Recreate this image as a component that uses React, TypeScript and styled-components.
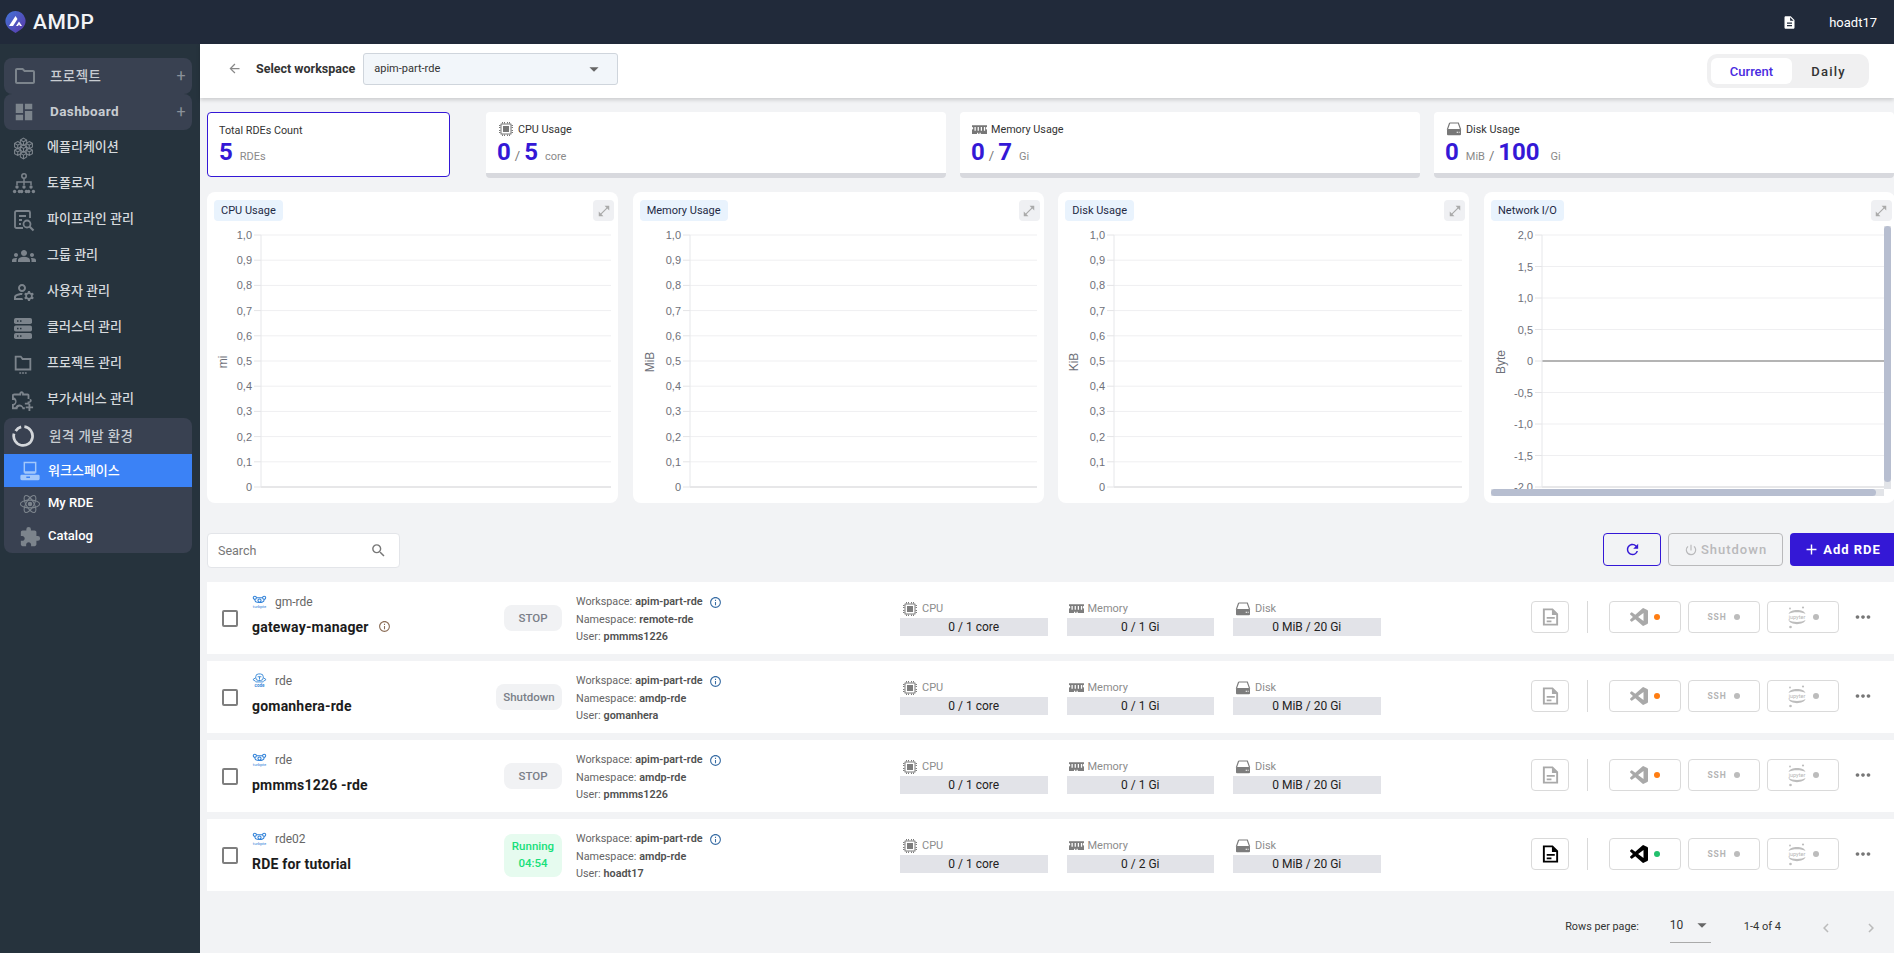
import React from "react";
import styled, { createGlobalStyle } from "styled-components";
import {
  MdOutlineFolder, MdDashboard, MdGroups, MdOutlineManageAccounts,
  MdExtension, MdDescription, MdArrowBack, MdArrowDropDown, MdOpenInFull, MdSearch, MdRefresh,
  MdPowerSettingsNew, MdAdd, MdInfoOutline, MdMoreHoriz, MdChevronLeft, MdChevronRight,
} from "react-icons/md";

const Global = createGlobalStyle`
  html, body { margin: 0; padding: 0; height: 100%; overflow: hidden; background: #f2f3f5; }
  #root { height: 100%; }
  * { box-sizing: border-box; }
  body { font-family: Roboto, "Noto Sans CJK KR", sans-serif; color: #222; }
`;

const Page = styled.div`display: flex; flex-direction: column; width: 1894px; height: 953px; overflow: hidden;`;
const Header = styled.header`
  height: 44px; flex: none; background: #212a3a; display: flex; align-items: center;
  padding: 0 17px 0 5px; color: #fff;
`;
const Brand = styled.div`font-size: 21px; font-weight: 500; letter-spacing: .5px; margin-left: 7px; color: #f3f4f6;`;
const HeaderRight = styled.div`margin-left: auto; display: flex; align-items: center; gap: 32px; font-size: 13px;`;
const Body = styled.div`flex: 1; display: flex; min-height: 0;`;

const Sidebar = styled.aside`width: 200px; flex: none; background: #26333d; padding: 14px 8px 0 4px;`;
const Group = styled.div`background: #394151; border-radius: 8px; overflow: hidden;`;
const GroupHead = styled.div<{ $inset?: number }>`
  height: 36px; display: flex; align-items: center; padding: 0 6px 0 ${p => p.$inset ?? 9}px; color: #c8ccd1;
  font-size: 13.5px; font-weight: 500; letter-spacing: .4px;
  svg { flex: none; color: #7c848c; }
`;
const GroupLabel = styled.span<{ $gap?: number; $bold?: boolean }>`
  margin-left: ${p => p.$gap ?? 13}px; flex: 1; padding-bottom: 2px; font-weight: ${p => (p.$bold ? 700 : 500)};
`;
const Plus = styled.span`color: #8a919a; font-size: 16px; line-height: 1; font-weight: 400;`;
const NavItem = styled.div`
  height: 36px; display: flex; align-items: center; padding-left: 8px; color: #d6dadd; font-size: 13px; font-weight: 500;
  svg { flex: none; color: #7c848c; }
`;
const NavLabel = styled.span<{ $gap?: number }>`margin-left: ${p => p.$gap ?? 13}px; padding-bottom: 5px;`;
const SubItem = styled.div<{ $active?: boolean }>`
  height: 33px; display: flex; align-items: center; padding-left: 15px; font-size: 13px; font-weight: 500; color: #fff;
  background: ${p => (p.$active ? "#3b82f6" : "transparent")};
  svg { flex: none; color: ${p => (p.$active ? "#a3c8fb" : "#7c848c")}; }
`;
const SubLabel = styled.span`margin-left: 7px; padding-bottom: 3px;`;

const Main = styled.main`flex: 1; min-width: 0; display: flex; flex-direction: column;`;
const TopBar = styled.div`
  height: 54px; flex: none; background: #fff; box-shadow: 0 2px 4px rgba(0,0,0,.16);
  display: flex; align-items: center; padding: 0 25px 0 27px;
`;
const WorkspacePick = styled.div`display: flex; align-items: center; color: #888; margin-top: -5px;`;
const TopTitle = styled.span`font-size: 12.5px; font-weight: 700; color: #333; margin: 0 8px 0 14px;`;
const SelectBox = styled.div`
  width: 255px; height: 32px; background: #f2f6fa; border: 1px solid #cfd5dc; border-radius: 3px;
  display: flex; align-items: center; justify-content: space-between; padding: 0 12px 0 10px;
  font-size: 11px; color: #333; svg { color: #666; }
`;
const Toggle = styled.div`
  margin-left: auto; width: 162px; height: 34px; background: #f0f0f1; border-radius: 10px; padding: 4px;
  display: flex; align-items: center;
`;
const ToggleOn = styled.div`
  width: 81px; height: 26px; background: #fff; border-radius: 6px; display: flex; align-items: center; justify-content: center;
  font-size: 13px; font-weight: 500; color: #4a2be0;
`;
const ToggleOff = styled.div`flex: 1; text-align: center; font-size: 13px; font-weight: 500; letter-spacing: 1.2px; color: #333;`;

const Content = styled.div`padding: 14px 0 0 7px; display: flex; flex-direction: column; flex: 1; min-height: 0;`;
const StatRow = styled.div`display: flex; height: 66px; flex: none;`;
const TotalCard = styled.div`
  width: 243px; margin-right: 36px; height: 65px; background: #fff; border: 1px solid #3418d6; border-radius: 4px; padding: 9px 11px;
`;
const StatCard = styled.div`
  width: 460px; margin-right: 14px; background: #fff; border-bottom: 5px solid #d8d9de; border-radius: 4px; padding: 7px 11px 0;
  &:last-child { margin-right: 0; }
`;
const StatHead = styled.div`
  display: flex; align-items: center; gap: 4px; font-size: 10.8px; color: #333; height: 20px; padding-left: 1px;
  svg { color: #777; }
`;
const TotalHead = styled.div`font-size: 10.8px; color: #333; line-height: 18px; margin-bottom: -1px;`;
const StatValue = styled.div`display: flex; align-items: baseline; height: 27px; line-height: 27px;`;
const Num = styled.span`font-size: 24px; font-weight: 700; color: #3418d6;`;
const Unit = styled.span<{ $gap?: number }>`font-size: 11px; color: #8a8a8a; margin-left: ${p => p.$gap ?? 7}px;`;
const Slash = styled.span`font-size: 13px; color: #777; margin: 0 4px 0 4px;`;

const ChartGrid = styled.div`
  display: grid; grid-template-columns: repeat(4, 411px); column-gap: 14.67px; margin-top: 14px; flex: none;
`;
const ChartCard = styled.section<{ $scroll?: boolean }>`
  height: 311px; background: #fff; border-radius: 8px; padding: 8px ${p => (p.$scroll ? 3 : 7)}px 0 7px;
`;
const ChartHead = styled.div<{ $flush?: boolean }>`
  display: flex; justify-content: space-between; height: 26px; margin-right: ${p => (p.$flush ? 0 : -3)}px;
`;
const ChartTitle = styled.span`
  height: 21px; background: #e9f3fd; border-radius: 4px; padding: 0 7px; font-size: 11px; font-weight: 400; line-height: 21px; color: #1f2a44;
`;
const Expand = styled.span`
  width: 21px; height: 21px; background: #eff0f3; border-radius: 4px; display: flex; align-items: center; justify-content: center; color: #aaa;
`;
const ChartScroll = styled.div`position: relative; width: 400px; height: 270px; overflow: hidden; svg { display: block; }`;
const ScrollX = styled.div`position: absolute; left: 0; bottom: 0; width: 393px; height: 7px; background: #e2e4e8;`;
const ThumbX = styled.div`width: 385px; height: 7px; border-radius: 4px; background: #b7bed0;`;
const ScrollY = styled.div`position: absolute; right: 0; top: 0; width: 7px; height: 263px; background: #e2e4e8;`;
const ThumbY = styled.div`width: 7px; height: 256px; border-radius: 4px; background: #b7bed0;`;
const ChartSvg = styled.svg`
  display: block;
  text { font-family: "Liberation Sans", Arial, sans-serif; font-size: 11px; fill: #6e7079; }
  text.unit { font-size: 12px; }
`;

const ListBar = styled.div`display: flex; align-items: flex-start; margin-top: 30px; height: 35px; flex: none;`;
const SearchBox = styled.div`
  width: 193px; height: 35px; background: #fff; border: 1px solid #e3e5e9; border-radius: 4px; display: flex; align-items: center;
  justify-content: space-between; padding: 0 12px 0 10px; font-size: 12.5px; color: #777; svg { color: #777; }
`;
const ListActions = styled.div`margin-left: auto; display: flex; gap: 7px;`;
const RefreshBtn = styled.button`
  width: 58px; height: 33px; border: 1px solid #3418d6; border-radius: 4px; background: transparent; color: #3418d6;
  display: flex; align-items: center; justify-content: center; padding: 0;
`;
const GhostBtn = styled.button`
  width: 115px; height: 33px; border: 1px solid #b9b9bb; border-radius: 4px; background: transparent; color: #b9b9bb;
  display: flex; align-items: center; justify-content: center; gap: 3px; padding: 0;
  font: 500 13px Roboto, sans-serif; letter-spacing: 1px;
`;
const PrimaryBtn = styled.button`
  width: 104px; height: 33px; border: 0; border-radius: 4px 0 0 4px; background: #3418d6; color: #fff;
  display: flex; align-items: center; justify-content: center; gap: 3px; padding: 0;
  font: 700 13px Roboto, sans-serif; letter-spacing: 1px;
`;

const Rows = styled.div`margin-top: 14px; display: flex; flex-direction: column; gap: 7px; flex: none;`;
const Row = styled.article`height: 72px; background: #fff; display: flex; align-items: center; padding-left: 15px;`;
const Check = styled.span`
  width: 16px; height: 17px; border: 2px solid #7e7e7e; border-radius: 2px; flex: none; margin-right: 14px; background: #fff;
`;
const Left = styled.div`width: 310px; flex: none; display: flex; align-items: center; justify-content: space-between;`;
const Identity = styled.div`display: flex; flex-direction: column; gap: 9px; padding-bottom: 6px;`;
const Kind = styled.div`display: flex; align-items: center; gap: 8px; font-size: 12px; color: #666; height: 14px;`;
const Name = styled.div`
  display: flex; align-items: center; gap: 9px; font-size: 14px; font-weight: 700; color: #1c1c1c; line-height: 18px; letter-spacing: .2px;
  svg { color: #8c6e58; }
`;
const Status = styled.div<{ $running?: boolean; $wide?: boolean }>`
  width: ${p => (p.$wide ? 66 : 58)}px; height: ${p => (p.$running ? 43 : 26)}px; border-radius: 8px;
  background: ${p => (p.$running ? "#e6fbef" : "#f1f2f4")};
  color: ${p => (p.$running ? "#17e07a" : "#7a7f88")};
  font-size: 11.5px; font-weight: 500; text-align: center;
  display: flex; flex-direction: column; align-items: center; justify-content: center; line-height: 17px;
`;
const Info = styled.div`width: 324px; margin-left: 14px; padding-top: 3px; flex: none; font-size: 10.8px; color: #666; line-height: 17.5px;`;
const InfoLine = styled.div`
  display: flex; align-items: center; gap: 3px;
  b { font-weight: 600; color: #505050; }
  svg { color: #3a6ea5; margin-left: 3px; }
`;
const Resources = styled.div`display: flex; gap: 19px; flex: none; padding-bottom: 1px;`;
const Resource = styled.div`width: 147.5px;`;
const ResHead = styled.div`
  height: 18px; display: flex; align-items: center; gap: 4px; font-size: 11px; color: #8c8c8c; padding-left: 2px; svg { color: #7d7d7d; }
`;
const ResBar = styled.div`
  height: 18px; background: #e2e3e8; font-size: 12px; color: #222; text-align: center; line-height: 18px;
`;
const Actions = styled.div`display: flex; align-items: center; margin-left: 150.5px; margin-top: -2px;`;
const DocBtn = styled.span<{ $on?: boolean }>`
  width: 38px; height: 32px; border: 1px solid #dadada; border-radius: 4px; display: flex; align-items: center; justify-content: center;
  color: ${p => (p.$on ? "#000" : "#a9a9a9")};
`;
const Divider = styled.span`width: 1px; height: 32px; background: #d9d9d9; margin: 0 21px 0 18px;`;
const ToolBtns = styled.div`display: flex; gap: 7px;`;
const ToolBtn = styled.span<{ $on?: boolean }>`
  width: 72px; height: 32px; border: 1px solid #dadada; border-radius: 4px; display: flex; align-items: center; justify-content: center; gap: 6px;
  color: ${p => (p.$on ? "#000" : "#a9a9a9")};
`;
const SshText = styled.span`font-size: 8.5px; font-weight: 700; color: #b5b5b5; letter-spacing: .8px; margin-right: 2px;`;
const Dot = styled.span<{ $c: string }>`width: 6px; height: 6px; border-radius: 50%; background: ${p => p.$c};`;
const More = styled.span`margin-left: 13px; color: #777; display: flex;`;

const Pager = styled.div`flex: 1; display: flex; align-items: flex-start; padding-top: 26px; color: #333;`;
const PagerLabel = styled.span`margin-left: auto; line-height: 20px; font-size: 10.8px;`;
const PagerSelect = styled.div`
  width: 41px; height: 26px; margin-left: 31px; border-bottom: 1px solid #aaa; display: flex; justify-content: space-between; line-height: 16px; font-size: 12px;
  svg { color: #666; margin-top: -3px; margin-right: -2px; }
`;
const PagerCount = styled.span`margin-left: 33px; line-height: 20px; font-size: 11px;`;
const PagerNav = styled.div`display: flex; gap: 27px; margin: 2px 14px 0 36px; color: #bbb;`;

const Logo = () => (
  <svg width="21" height="24" viewBox="0 0 21 24">
    <defs>
      <linearGradient id="lg" x1="0" y1="0" x2="1" y2="1">
        <stop offset="0" stopColor="#4274d9" />
        <stop offset="1" stopColor="#5b37a8" />
      </linearGradient>
    </defs>
    <path d="M10.500 1a10 10 0 0 1 5 18.700L10.500 23l-5-3.300A10 10 0 0 1 10.500 1z" fill="url(#lg)" />
    <path d="M4 16 10.500 6l2 3L8 16zM11 16l3-4.500 3 4.500h-2l-1-1.600L13 16z" fill="#fff" />
  </svg>
);

const hexes: [number, number][] = [[12, 12], [12, 5], [12, 19], [6, 8.500], [18, 8.500], [6, 15.500], [18, 15.500]];
const CubesIcon = () => (
  <svg width="23" height="23" viewBox="0 0 24 24" fill="none" stroke="currentColor">
    {hexes.map(([x, y], i) => (
      <path key={i} d={`M${x} ${y - 3.800}l3.300 1.900v3.800l-3.300 1.900-3.300-1.900v-3.800zM${x - 3.300} ${y - 1.900}l3.300 1.900 3.300-1.900M${x} ${y}v3.800`} strokeWidth="1.100" />
    ))}
  </svg>
);
const TopologyIcon = () => (
  <svg width="24" height="24" viewBox="0 0 24 24" fill="none" stroke="currentColor" strokeWidth="1.500">
    <circle cx="12" cy="4" r="2.200" />
    <path d="M12 6.500v3.500M5 13v-3h14v3M12 10v3" />
    {[5, 12, 19].map(x => (
      <g key={x}>
        <circle cx={x} cy="15" r="1.700" fill="currentColor" stroke="none" />
        <circle cx={x - 2.400} cy="19.500" r="1.700" fill="currentColor" stroke="none" />
        <circle cx={x + 2.400} cy="19.500" r="1.700" fill="currentColor" stroke="none" />
      </g>
    ))}
  </svg>
);
const PipelineIcon = () => (
  <svg width="24" height="24" viewBox="0 0 24 24" fill="none" stroke="currentColor" strokeWidth="1.800">
    <path d="M11 20H4.500A1.500 1.500 0 0 1 3 18.500V4.500A1.500 1.500 0 0 1 4.500 3h12A1.500 1.500 0 0 1 18 4.500V10" />
    <path d="M7 8h7M7 12h3M7 16h2" />
    <circle cx="15" cy="16" r="3.500" />
    <path d="M17.500 18.500 21.500 22.500" strokeWidth="2.200" />
  </svg>
);
const ClusterIcon = () => (
  <svg width="22" height="24" viewBox="0 0 22 24">
    {[2, 9.500, 17].map(y => (
      <g key={y}>
        <rect x="2" y={y} width="18" height="6" rx="1.800" fill="currentColor" />
        <rect x="5" y={y + 2.300} width="1.500" height="1.500" fill="#26333d" />
        <rect x="8" y={y + 2.300} width="1.500" height="1.500" fill="#26333d" />
      </g>
    ))}
  </svg>
);
const FolderDots = () => (
  <svg width="22" height="24" viewBox="0 0 24 24" fill="currentColor">
    <path d="M3 3h7l2 2.500h9V19H3zm2 2v12h14V7.500h-8L9.200 5z" fillRule="evenodd" />
    <path d="M8 21h2v1.500H8zM11 21h2v1.500h-2zM14 21h2v1.500h-2z" />
  </svg>
);
const ExtPlus = () => (
  <svg width="22" height="22" viewBox="0 0 24 24" fill="currentColor">
    <path d="M10.500 4.500c.28 0 .5.22.5.5v2h6v4h2c.8 0 .5 2.500 0 2.500h-2v1.500h-3v5h-1.600c-.68-1.750-2.390-3-4.380-3s-3.700 1.250-4.380 3H2v-2.120c1.750-.68 3-2.390 3-4.380 0-1.990-1.240-3.700-2.990-4.380L2 7h8V5c0-.28.22-.5.5-.5zm0-2C9.120 2.500 8 3.620 8 5H2.500C1.100 5 0 5.900 0 7v5h.8c1.490 0 2.700.2 2.700 1.700s-1.210 2.700-2.700 2.700H0V22h6v-.3c0-1.490 1.210-2.700 2.700-2.700s2.700 1.210 2.700 2.700v.3H14v-5h5v-2c1.380 0 2.500-1.120 2.500-2.500S20.380 11 19 11V7c0-1.100-.9-2-2-2h-4c0-1.380-1.120-2.500-2.500-2.500z" fillRule="evenodd" />
    <path d="M18 16h2v3h3v2h-3v3h-2v-3h-3v-2h3z" />
  </svg>
);
const Donut = () => (
  <svg width="22" height="22" viewBox="0 0 24 24" fill="none" stroke="#d3d6da" strokeWidth="3">
    <path d="M13.500 1.800A10.300 10.300 0 1 1 2.200 9.300" />
    <path d="M4 6.500 A10 10 0 0 1 10 2" />
  </svg>
);
const Desktop = () => (
  <svg width="22" height="22" viewBox="0 0 24 24" fill="currentColor">
    <path d="M5 2h14v12H5zm1.600 1.600v8.800h10.800V3.600z" fillRule="evenodd" />
    <path d="M6 13h12v2H6zM3 16h18a1.500 1.500 0 0 1 1.500 1.500v3a1.500 1.500 0 0 1-1.500 1.500H3a1.500 1.500 0 0 1-1.500-1.500v-3A1.500 1.500 0 0 1 3 16zm5 2v1.500h4V18z" fillRule="evenodd" />
  </svg>
);
const Atom = () => (
  <svg width="22" height="22" viewBox="0 0 24 24" fill="none" stroke="currentColor" strokeWidth="1.200">
    <ellipse cx="12" cy="12" rx="10.500" ry="4.200" />
    <ellipse cx="12" cy="12" rx="10.500" ry="4.200" transform="rotate(60 12 12)" />
    <ellipse cx="12" cy="12" rx="10.500" ry="4.200" transform="rotate(120 12 12)" />
    <circle cx="12" cy="12" r="1.800" fill="currentColor" />
  </svg>
);
const CpuIcon = () => (
  <svg width="16" height="16" viewBox="0 0 16 16" fill="currentColor">
    <path d="M3 2.500h10a.5.5 0 0 1 .5.5v10a.5.5 0 0 1-.5.5H3a.5.5 0 0 1-.5-.5V3a.5.5 0 0 1 .5-.5zm.5 1v9h9v-9z" fillRule="evenodd" />
    <rect x="5" y="5" width="6" height="6" />
    <path d="M4 1h1v1.500H4zM6 1h1v1.500H6zM9 1h1v1.500H9zM11 1h1v1.500h-1zM4 13.500h1V15H4zM6 13.500h1V15H6zM9 13.500h1V15H9zM11 13.500h1V15h-1zM1 4h1.500v1H1zM1 6h1.500v1H1zM1 9h1.500v1H1zM1 11h1.500v1H1zM13.500 4H15v1h-1.500zM13.500 6H15v1h-1.500zM13.500 9H15v1h-1.500zM13.500 11H15v1h-1.500z" />
  </svg>
);
const RamIcon = () => (
  <svg width="15" height="15" viewBox="0 0 24 24" fill="currentColor">
    <path d="M0 5h24v3a2 2 0 0 0 0 4v7H14v-2h-2v2h-2v-2H8v2H0v-7a2 2 0 0 0 0-4z" />
    <path d="M4 8h2v6H4zM9 8h2v6H9zM14 8h2v6h-2zM19 8h2v6h-2z" fill="#fff" />
  </svg>
);
const DiskIcon = () => (
  <svg width="16" height="16" viewBox="0 0 24 24">
    <path d="M5.500 3h13l3.500 10M5.500 3 2 13" fill="none" stroke="currentColor" strokeWidth="1.800" />
    <path d="M3 12h18a1.500 1.500 0 0 1 1.500 1.500V20a1.500 1.500 0 0 1-1.500 1.500H3A1.500 1.500 0 0 1 1.500 20v-6.500A1.500 1.500 0 0 1 3 12z" fill="currentColor" />
    <path d="M16 16h2v1.800h-2zM19 16h1.500v1.800H19z" fill="#fff" />
  </svg>
);
const TurboMark = () => (
  <svg width="15" height="14" viewBox="0 0 16 15" fill="none" stroke="#2f80d8" strokeWidth="1.100">
    <circle cx="3" cy="3" r="1.700" />
    <circle cx="8" cy="6" r="1.700" />
    <circle cx="13" cy="3" r="1.700" />
    <path d="M3 5c0 2.500 3 3 5 3s5-.5 5-3M4.700 3h6.600" />
    <text x="8" y="14" textAnchor="middle" fontSize="4.500" fill="#2f80d8" stroke="none" fontFamily="Roboto, sans-serif">turbpte</text>
  </svg>
);
const CodeMark = () => (
  <svg width="15" height="15" viewBox="0 0 16 16" fill="none" stroke="#3a8ad8" strokeWidth="1">
    <rect x="4" y="1" width="8" height="7" rx="3" />
    <path d="M6 4h4M8 4v3M4 5 1 7l3 2M12 5l3 2-3 2M4 9.500h8" />
    <text x="8" y="15.200" textAnchor="middle" fontSize="4.800" fontWeight="700" fill="#3a8ad8" stroke="none" fontFamily="Roboto, sans-serif">code</text>
  </svg>
);
const DocIcon = () => (
  <svg width="19" height="20" viewBox="0 0 20 20">
    <path d="M3 2h9l5 5v11H3z" fill="none" stroke="currentColor" strokeWidth="2" />
    <path d="M11.500 2v6h6z" fill="currentColor" />
    <path d="M6 11h8.500M6 14.500h5" stroke="currentColor" strokeWidth="1.800" />
  </svg>
);
const VsIcon = () => (
  <svg width="18" height="18" viewBox="0 0 24 24" fill="currentColor">
    <path d="M23.150 2.587 18.210.21a1.494 1.494 0 0 0-1.705.29l-9.460 8.630-4.120-3.128a.999.999 0 0 0-1.276.057L.327 7.261A1 1 0 0 0 .326 8.740L3.899 12 .326 15.260a1 1 0 0 0 .001 1.479L1.650 17.940a.999.999 0 0 0 1.276.057l4.120-3.128 9.460 8.630a1.492 1.492 0 0 0 1.704.29l4.942-2.377A1.500 1.500 0 0 0 24 20.060V3.939a1.500 1.500 0 0 0-.850-1.352zm-5.146 14.861L10.826 12l7.178-5.448v10.896z" />
  </svg>
);
const JupyterIcon = () => (
  <svg width="20" height="24" viewBox="0 0 20 24" fill="#bdbdbd">
    <path d="M1.500 9c1.500-5.500 15.500-5.500 17 0-3.500-2.500-13.500-2.500-17 0zM1.500 15c1.500 5.500 15.500 5.500 17 0-3.500 2.500-13.500 2.500-17 0z" />
    <circle cx="16" cy="2.500" r="1.100" />
    <circle cx="3" cy="3.500" r=".9" />
    <circle cx="3.500" cy="22" r="1.300" />
    <text x="10" y="13.800" textAnchor="middle" fontSize="5.500" fontFamily="Roboto, sans-serif" fill="#b5b5b5">jupyter</text>
  </svg>
);

const Y10 = ["1,0", "0,9", "0,8", "0,7", "0,6", "0,5", "0,4", "0,3", "0,2", "0,1", "0"];
const Y2 = ["2,0", "1,5", "1,0", "0,5", "0", "-0,5", "-1,0", "-1,5", "-2,0"];

function Chart({ ticks, unit, axis, unitX, width, zero }: { ticks: string[]; unit: string; axis: number; unitX: number; width: number; zero?: boolean }) {
  const top = 9;
  const bottom = 261;
  const step = (bottom - top) / (ticks.length - 1);
  return (
    <ChartSvg width={width} height={270}>
      {ticks.map((t, i) => {
        const y = top + i * step;
        const isLast = i === ticks.length - 1;
        const isZero = zero && t === "0";
        return (
          <g key={t}>
            <line x1={axis - 7} x2={axis} y1={y} y2={y} stroke="#e4e4e6" />
            <line x1={axis} x2={width} y1={y} y2={y} stroke={isZero ? "#b4b4b4" : isLast ? "#cfcfd2" : "#efeff1"} strokeWidth={isZero ? 2 : 1} />
            <text x={axis - 9} y={y + 4} textAnchor="end">{t}</text>
          </g>
        );
      })}
      <line x1={axis} x2={axis} y1={top} y2={bottom} stroke="#e6e7ea" />
      <text className="unit" x={unitX} y={136} textAnchor="middle" transform={`rotate(-90 ${unitX} 136)`}>{unit}</text>
    </ChartSvg>
  );
}

const charts = [
  { title: "CPU Usage", unit: "mi", axis: 47, unitX: 13 },
  { title: "Memory Usage", unit: "MiB", axis: 50, unitX: 14 },
  { title: "Disk Usage", unit: "KiB", axis: 49, unitX: 13 },
];

const rows = [
  { kind: "gm-rde", name: "gateway-manager", mark: <TurboMark />, status: "STOP", ns: "remote-rde", user: "pmmms1226", mem: "0 / 1 Gi", hint: true },
  { kind: "rde", name: "gomanhera-rde", mark: <CodeMark />, status: "Shutdown", ns: "amdp-rde", user: "gomanhera", mem: "0 / 1 Gi" },
  { kind: "rde", name: "pmmms1226 -rde", mark: <TurboMark />, status: "STOP", ns: "amdp-rde", user: "pmmms1226", mem: "0 / 1 Gi" },
  { kind: "rde02", name: "RDE for tutorial", mark: <TurboMark />, status: "Running", time: "04:54", ns: "amdp-rde", user: "hoadt17", mem: "0 / 2 Gi", on: true },
];

export default function App() {
  return (
    <Page>
      <Global />
      <Header>
        <Logo />
        <Brand>AMDP</Brand>
        <HeaderRight>
          <MdDescription size={15} />
          <span>hoadt17</span>
        </HeaderRight>
      </Header>
      <Body>
        <Sidebar>
          <Group>
            <GroupHead><MdOutlineFolder size={24} /><GroupLabel>프로젝트</GroupLabel><Plus>+</Plus></GroupHead>
          </Group>
          <Group>
            <GroupHead><MdDashboard size={22} /><GroupLabel $gap={15} $bold>Dashboard</GroupLabel><Plus>+</Plus></GroupHead>
          </Group>
          <NavItem><CubesIcon /><NavLabel $gap={12}>에플리케이션</NavLabel></NavItem>
          <NavItem><TopologyIcon /><NavLabel $gap={11}>토폴로지</NavLabel></NavItem>
          <NavItem><PipelineIcon /><NavLabel $gap={11}>파이프라인 관리</NavLabel></NavItem>
          <NavItem><MdGroups size={24} /><NavLabel $gap={11}>그룹 관리</NavLabel></NavItem>
          <NavItem><MdOutlineManageAccounts size={24} /><NavLabel $gap={11}>사용자 관리</NavLabel></NavItem>
          <NavItem><ClusterIcon /><NavLabel>클러스터 관리</NavLabel></NavItem>
          <NavItem><FolderDots /><NavLabel>프로젝트 관리</NavLabel></NavItem>
          <NavItem><ExtPlus /><NavLabel>부가서비스 관리</NavLabel></NavItem>
          <Group>
            <GroupHead $inset={8}><Donut /><GroupLabel $gap={15}>원격 개발 환경</GroupLabel></GroupHead>
            <SubItem $active><Desktop /><SubLabel>워크스페이스</SubLabel></SubItem>
            <SubItem><Atom /><SubLabel>My RDE</SubLabel></SubItem>
            <SubItem><MdExtension size={22} /><SubLabel>Catalog</SubLabel></SubItem>
          </Group>
        </Sidebar>
        <Main>
          <TopBar>
            <WorkspacePick>
              <MdArrowBack size={15} />
              <TopTitle>Select workspace</TopTitle>
              <SelectBox>apim-part-rde<MdArrowDropDown size={22} /></SelectBox>
            </WorkspacePick>
            <Toggle><ToggleOn>Current</ToggleOn><ToggleOff>Daily</ToggleOff></Toggle>
          </TopBar>
          <Content>
            <StatRow>
              <TotalCard>
                <TotalHead>Total RDEs Count</TotalHead>
                <StatValue><Num>5</Num><Unit>RDEs</Unit></StatValue>
              </TotalCard>
              <StatCard>
                <StatHead><CpuIcon />CPU Usage</StatHead>
                <StatValue><Num>0</Num><Slash>/</Slash><Num>5</Num><Unit>core</Unit></StatValue>
              </StatCard>
              <StatCard>
                <StatHead><RamIcon />Memory Usage</StatHead>
                <StatValue><Num>0</Num><Slash>/</Slash><Num>7</Num><Unit>Gi</Unit></StatValue>
              </StatCard>
              <StatCard>
                <StatHead><DiskIcon />Disk Usage</StatHead>
                <StatValue><Num>0</Num><Unit>MiB</Unit><Slash>/</Slash><Num>100</Num><Unit $gap={11}>Gi</Unit></StatValue>
              </StatCard>
            </StatRow>
            <ChartGrid>
              {charts.map(c => (
                <ChartCard key={c.title}>
                  <ChartHead>
                    <ChartTitle>{c.title}</ChartTitle>
                    <Expand><MdOpenInFull size={14} /></Expand>
                  </ChartHead>
                  <Chart ticks={Y10} unit={c.unit} axis={c.axis} unitX={c.unitX} width={397} />
                </ChartCard>
              ))}
              <ChartCard $scroll>
                <ChartHead $flush>
                  <ChartTitle>Network I/O</ChartTitle>
                  <Expand><MdOpenInFull size={14} /></Expand>
                </ChartHead>
                <ChartScroll>
                  <Chart ticks={Y2} unit="Byte" axis={51} unitX={14} width={401} zero />
                  <ScrollY><ThumbY /></ScrollY>
                  <ScrollX><ThumbX /></ScrollX>
                </ChartScroll>
              </ChartCard>
            </ChartGrid>
            <ListBar>
              <SearchBox>Search<MdSearch size={17} /></SearchBox>
              <ListActions>
                <RefreshBtn><MdRefresh size={17} /></RefreshBtn>
                <GhostBtn><MdPowerSettingsNew size={14} />Shutdown</GhostBtn>
                <PrimaryBtn><MdAdd size={17} />Add RDE</PrimaryBtn>
              </ListActions>
            </ListBar>
            <Rows>
              {rows.map(r => (
                <Row key={r.name}>
                  <Check />
                  <Left>
                    <Identity>
                      <Kind>{r.mark}{r.kind}</Kind>
                      <Name>{r.name}{r.hint && <MdInfoOutline size={13} />}</Name>
                    </Identity>
                    <Status $running={!!r.time} $wide={r.status === "Shutdown"}>
                      <span>{r.status}</span>
                      {r.time && <span>{r.time}</span>}
                    </Status>
                  </Left>
                  <Info>
                    <InfoLine>Workspace:<b>apim-part-rde</b><MdInfoOutline size={13} /></InfoLine>
                    <InfoLine>Namespace:<b>{r.ns}</b></InfoLine>
                    <InfoLine>User:<b>{r.user}</b></InfoLine>
                  </Info>
                  <Resources>
                    <Resource><ResHead><CpuIcon />CPU</ResHead><ResBar>0 / 1 core</ResBar></Resource>
                    <Resource><ResHead><RamIcon />Memory</ResHead><ResBar>{r.mem}</ResBar></Resource>
                    <Resource><ResHead><DiskIcon />Disk</ResHead><ResBar>0 MiB / 20 Gi</ResBar></Resource>
                  </Resources>
                  <Actions>
                    <DocBtn $on={r.on}><DocIcon /></DocBtn>
                    <Divider />
                    <ToolBtns>
                      <ToolBtn $on={r.on}><VsIcon /><Dot $c={r.on ? "#22c06c" : "#ff7d12"} /></ToolBtn>
                      <ToolBtn><SshText>SSH</SshText><Dot $c="#bcbcbc" /></ToolBtn>
                      <ToolBtn><JupyterIcon /><Dot $c="#bcbcbc" /></ToolBtn>
                    </ToolBtns>
                    <More><MdMoreHoriz size={22} /></More>
                  </Actions>
                </Row>
              ))}
            </Rows>
            <Pager>
              <PagerLabel>Rows per page:</PagerLabel>
              <PagerSelect>10<MdArrowDropDown size={22} /></PagerSelect>
              <PagerCount>1-4 of 4</PagerCount>
              <PagerNav><MdChevronLeft size={18} /><MdChevronRight size={18} /></PagerNav>
            </Pager>
          </Content>
        </Main>
      </Body>
    </Page>
  );
}
